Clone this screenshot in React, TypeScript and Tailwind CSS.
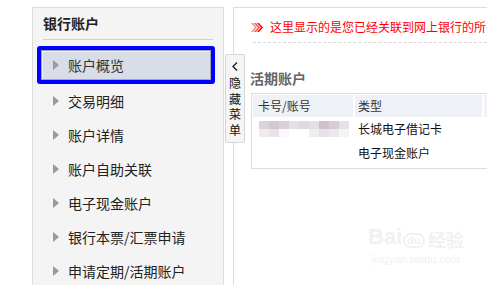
import React from "react";

const font = { fontFamily: '"Noto Sans CJK SC", "Noto Sans", sans-serif' };

function Tri() {
  return (
    <svg width="6" height="10" viewBox="0 0 6 10" className="shrink-0">
      <path d="M0 0 L6 5 L0 10 Z" fill="#9a9a9a" />
    </svg>
  );
}

const items = ["交易明细", "账户详情", "账户自助关联", "电子现金账户", "银行本票/汇票申请", "申请定期/活期账户"];

const mosaic = [
  ["#ddd2db", "#d4c6d2", "#dacfd8", "#e6dfe5", "#e1d9e0", "#e6e0e5", "#cfc0cf", "#d5ccd4", "#e3e2e8"],
  ["#eeeaee", "#e9e3e9", "#f9f9f9", "#ffffff", "#ffffff", "#f0edf0", "#e5e2e9", "#e9e8ec", "#f4f4f6"],
];

export default function App() {
  return (
    <div className="relative w-[487px] h-[285px] overflow-hidden bg-white flex pt-[7px] pl-[32px]" style={font}>
      {/* Sidebar */}
      <div className="w-[192px] h-[300px] border border-[#dcdcdc] bg-[#f4f4f4] shrink-0">
        <div className="mx-[10px] h-[32px] border-b border-[#d0d0d0] flex items-center text-[14px] font-bold text-[#222]">
          银行账户
        </div>
        <div className="mt-[6px] ml-[4px] w-[178px] h-[38px] border-4 border-[#0000ff] rounded-[3px]">
          <div className="h-full bg-[#d8dde8] border border-[#a3a6ae] shadow-[inset_1px_1px_0_#f0f2f6] flex items-center pl-[11px] gap-[9px] text-[14px] text-[#333]">
            <Tri />
            <span>账户概览</span>
          </div>
        </div>
        <div className="flex flex-col">
          {items.map((t) => (
            <div key={t} className="h-[34px] flex items-center pl-[20px] gap-[9px] text-[14px] text-[#222]">
              <Tri />
              <span>{t}</span>
            </div>
          ))}
        </div>
      </div>

      {/* Main */}
      <div className="ml-[9px] flex-1 h-[300px] border-l border-t border-r border-[#dcdcdc] pl-[17px] pr-[2px] pt-[11px]">
        <div className="flex items-center h-[16px] gap-[7px] whitespace-nowrap overflow-hidden">
          <svg width="12" height="9" viewBox="0 0 12 9" className="shrink-0">
            <path d="M0 0 L4 4.5 L0 9 L2 9 L6 4.5 L2 0 Z" fill="#ff8a8a" />
            <path d="M3 0 L7 4.5 L3 9 L5 9 L9 4.5 L5 0 Z" fill="#ff4a4a" />
            <path d="M6 0 L10 4.5 L6 9 L8 9 L12 4.5 L8 0 Z" fill="#ff0000" />
          </svg>
          <span className="text-[12px] text-[#ff0000]">这里显示的是您已经关联到网上银行的所有账户</span>
        </div>
        <div className="mt-[7px] ml-[2px] border-t border-dashed border-[#d8d8d8]" />
        <div className="mt-[26px] text-[14px] font-bold text-[#666] h-[18px] leading-[18px] -ml-[1px]">活期账户</div>
        <div className="mt-[6px] border border-[#dcdcdc] p-[1px] h-[76px]">
          <div className="flex h-[22px] gap-[2px] text-[12px] text-[#333]">
            <div className="w-[100px] bg-[#eef1f6] flex items-center pl-[5px]">卡号/账号</div>
            <div className="w-[127px] bg-[#eef1f6] flex items-center pl-[3px]">类型</div>
            <div className="flex-1 bg-[#eef1f6]" />
          </div>
          <div className="flex h-[23px] items-center text-[12px] text-[#111]">
            <div className="w-[102px] pl-[6px]">
              <div className="flex flex-col">
                {mosaic.map((row, i) => (
                  <div key={i} className="flex">
                    {row.map((c, j) => (
                      <div key={j} className="w-[10px] h-[8px]" style={{ backgroundColor: c }} />
                    ))}
                  </div>
                ))}
              </div>
            </div>
            <div className="pl-[3px]">长城电子借记卡</div>
          </div>
          <div className="flex h-[25px] items-center text-[12px] text-[#111]">
            <div className="w-[102px]" />
            <div className="pl-[3px]">电子现金账户</div>
          </div>
        </div>
      </div>

      {/* Hide menu tab */}
      <div className="absolute left-[225px] top-[54px] w-[20px] h-[89px] bg-[#f5f5f5] border border-[#d6d6d6] rounded-[2px] flex flex-col items-center pt-[7px] text-[12px] leading-[15.5px] text-[#111]">
        <svg width="6" height="9" viewBox="0 0 6 9" className="mb-[4px]">
          <path d="M5 0.5 L1 4.5 L5 8.5" fill="none" stroke="#222" strokeWidth="1.4" />
        </svg>
        <span>隐</span>
        <span>藏</span>
        <span>菜</span>
        <span>单</span>
      </div>

      {/* Watermark */}
      <div className="absolute left-[368px] top-[226px] flex flex-col items-center text-[#f1f1f1] select-none">
        <div className="flex items-end leading-none">
          <span className="text-[22px] font-bold" style={{ fontFamily: '"Liberation Sans", sans-serif' }}>Bai</span>
          <span className="mx-[1px] text-[11px] font-bold border-2 border-[#f1f1f1] rounded-full px-[2px]" style={{ fontFamily: '"Liberation Sans", sans-serif' }}>du</span>
          <span className="text-[18px] font-bold ml-[2px]">经验</span>
        </div>
        <span className="text-[11px] mt-[3px]" style={{ fontFamily: '"Liberation Sans", sans-serif' }}>jingyan.baidu.com</span>
      </div>
    </div>
  );
}
